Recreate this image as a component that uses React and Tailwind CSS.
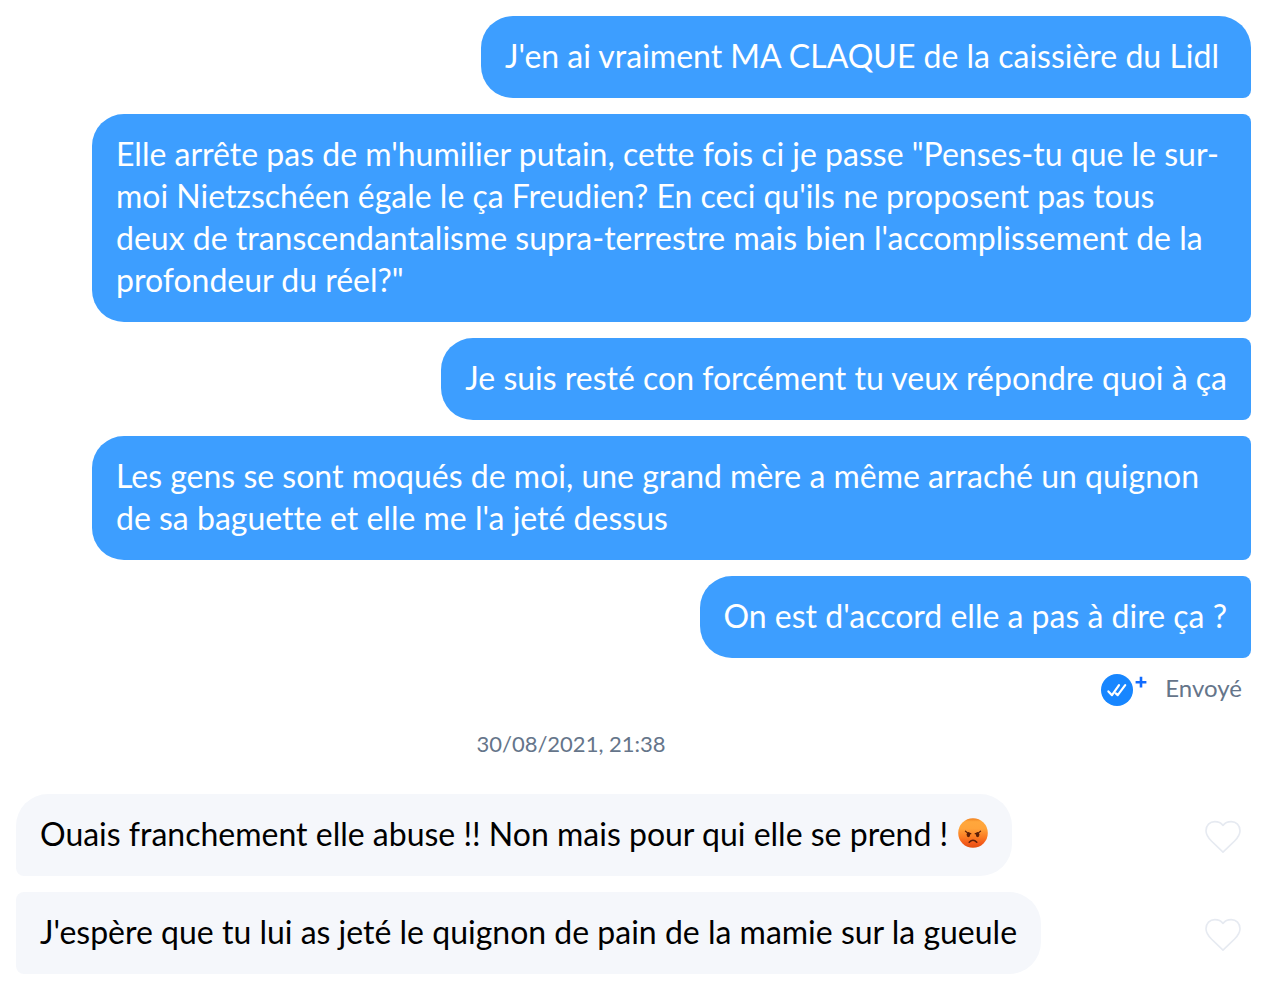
import React from 'react';
import clsx from 'clsx';

const sent = [
    { id: 1, lines: ["J'en ai vraiment MA CLAQUE de la caissière du Lidl"] },
    {
        id: 2,
        lines: [
            'Elle arrête pas de m\'humilier putain, cette fois ci je passe "Penses-tu que le sur-',
            'moi Nietzschéen égale le ça Freudien? En ceci qu\'ils ne proposent pas tous',
            "deux de transcendantalisme supra-terrestre mais bien l'accomplissement de la",
            'profondeur du réel?"',
        ],
    },
    { id: 3, lines: ['Je suis resté con forcément tu veux répondre quoi à ça'] },
    {
        id: 4,
        lines: [
            'Les gens se sont moqués de moi, une grand mère a même arraché un quignon',
            "de sa baguette et elle me l'a jeté dessus",
        ],
    },
    { id: 5, lines: ["On est d'accord elle a pas à dire ça ?"] },
];

const received = [
    { id: 6, text: 'Ouais franchement elle abuse !! Non mais pour qui elle se prend !', angry: true },
    { id: 7, text: "J'espère que tu lui as jeté le quignon de pain de la mamie sur la gueule" },
];

function AngryFace() {
    return (
        <svg viewBox="0 0 30 30" className="ml-[10px] inline-block size-[30px] align-[-2px]" role="img" aria-label="En colère">
            <defs>
                <linearGradient id="face" x1="0" y1="0" x2="0" y2="1">
                    <stop offset="0" stopColor="#f0801f" />
                    <stop offset="0.12" stopColor="#ffa73c" />
                    <stop offset="0.35" stopColor="#ffa33a" />
                    <stop offset="0.65" stopColor="#fb7a22" />
                    <stop offset="0.85" stopColor="#f35a1a" />
                    <stop offset="1" stopColor="#e2500f" />
                </linearGradient>
            </defs>
            <circle cx="15" cy="15" r="14.8" fill="url(#face)" />
            <ellipse cx="10.4" cy="16.6" rx="1.8" ry="2.6" fill="#5c1f08" />
            <ellipse cx="19.6" cy="16.6" rx="1.8" ry="2.6" fill="#5c1f08" />
            <path d="M7.4 13.2q1.8 2.4 5.4 2.5M22.6 13.2q-1.8 2.4-5.4 2.5" fill="none" stroke="#5c1f08" strokeWidth="1.2" strokeLinecap="round" />
            <path d="M11.2 24.2q3.8-4 7.6 0" fill="none" stroke="#5c1f08" strokeWidth="1.5" strokeLinecap="round" />
        </svg>
    );
}

function ReadBadge() {
    return (
        <svg viewBox="0 0 46 32" className="h-8 w-[46px]" aria-hidden="true">
            <circle cx="16" cy="16" r="16" fill="#1786ff" />
            <path d="M7.4 17.4l3.6 3.8 7-10M14.8 19.4l1.9 1.8 7.5-10" fill="none" stroke="#fff" strokeWidth="2.2" strokeLinecap="round" strokeLinejoin="round" />
            <path d="M40 2.8v10.8M34.6 8.2h10.8" stroke="#106bff" strokeWidth="2.6" />
        </svg>
    );
}

function HeartButton() {
    return (
        <button type="button" aria-label="J'aime" className="mr-[10px] cursor-pointer pt-[3px]">
            <svg viewBox="0 0 36 34" className="block h-[34px] w-9" fill="none" stroke="#e6eaf1" strokeWidth="1.6" strokeLinejoin="round">
                <path d="M18 32.2L6.4 21C3 17.6 1 14.4 1 10.8C1 5.4 4.800 1.600 9.800 1.600C13.200 1.600 16.200 3 18 5.400C19.800 3 22.800 1.600 26.200 1.600C31.200 1.600 35 5.400 35 10.800C35 14.400 33 17.600 29.600 21Z" />
            </svg>
        </button>
    );
}

export default function App() {
    return (
        <main className="bg-white pt-4 pr-[25px] pb-4 pl-4 font-['Lato','Liberation_Sans',sans-serif] text-[32px] leading-[42px] [font-variant-ligatures:none]">
            <section className="flex flex-col items-end gap-4 pl-[76px]">
                {sent.map((msg, i) => (
                    <p
                        key={msg.id}
                        className={clsx(
                            'rounded-l-[32px] bg-[#3d9eff] pt-[19px] pb-[21px] pl-6 text-white',
                            i === 0 ? 'rounded-tr-[32px] rounded-br-lg pr-8' : 'rounded-r-lg pr-6',
                            msg.lines.length > 1 && 'w-full',
                        )}
                    >
                        {msg.lines.map((line, n) => (
                            <React.Fragment key={line}>
                                {n > 0 && <br />}
                                {line}
                            </React.Fragment>
                        ))}
                    </p>
                ))}
                <div className="flex items-start gap-[18px] pr-[9px] text-2xl text-[#65758a]">
                    <ReadBadge />
                    <span className="leading-7">Envoyé</span>
                </div>
            </section>

            <time className="mt-6 mb-9 block pr-[125px] text-center text-[22px] leading-7 text-[#65758a]">30/08/2021, 21:38</time>

            <section className="flex flex-col gap-4">
                {received.map((msg, i) => (
                    <div key={msg.id} className="flex items-center justify-between">
                        <p
                            className={clsx(
                                'rounded-r-[32px] bg-[#f5f7fb] px-6 pt-[19px] pb-[21px] text-black',
                                i === 0 ? 'rounded-tl-[32px] rounded-bl-lg' : 'rounded-l-lg',
                            )}
                        >
                            {msg.text}
                            {msg.angry && <AngryFace />}
                        </p>
                        <HeartButton />
                    </div>
                ))}
            </section>
        </main>
    );
}
